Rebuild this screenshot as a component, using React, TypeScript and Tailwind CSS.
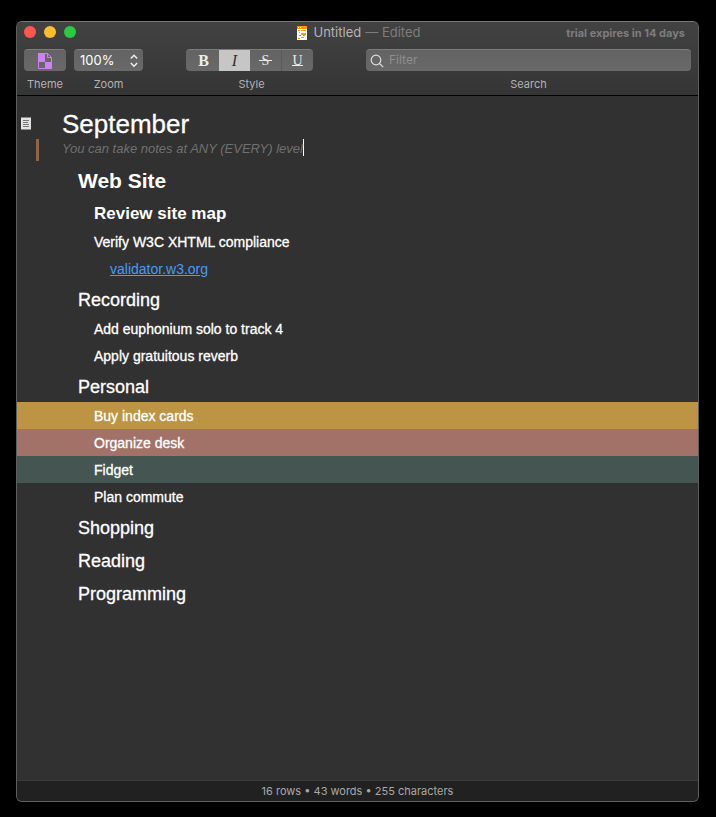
import React, { useState } from "react";

type Row = {
  text: string;
  kind: "big" | "bold" | "heading" | "item" | "link";
  fill?: string;
};

const rows: Row[] = [
  { text: "Web Site", kind: "big" },
  { text: "Review site map", kind: "bold" },
  { text: "Verify W3C XHTML compliance", kind: "item" },
  { text: "validator.w3.org", kind: "link" },
  { text: "Recording", kind: "heading" },
  { text: "Add euphonium solo to track 4", kind: "item" },
  { text: "Apply gratuitous reverb", kind: "item" },
  { text: "Personal", kind: "heading" },
  { text: "Buy index cards", kind: "item", fill: "bg-[#bd9344]" },
  { text: "Organize desk", kind: "item", fill: "bg-[#a27268]" },
  { text: "Fidget", kind: "item", fill: "bg-[#455652]" },
  { text: "Plan commute", kind: "item" },
  { text: "Shopping", kind: "heading" },
  { text: "Reading", kind: "heading" },
  { text: "Programming", kind: "heading" },
];

const rowStyles = {
  big: "h-[35px] pl-[61px] text-[21px] font-bold",
  bold: "h-[30px] pl-[77px] pt-[2px] text-[17px] font-bold",
  heading: "h-[33px] pl-[61px] pt-1 text-[18px] [-webkit-text-stroke:0.3px_white]",
  item: "h-[27px] pl-[77px] pt-[2px] text-[14px] [-webkit-text-stroke:0.3px_white]",
  link: "h-[27px] pl-[93px] pt-[2px] text-[14px]",
};

const control = "border-t border-[#7c7c7c] bg-linear-to-b from-[#636363] to-[#696969]";

function OutlineRow({ row }: { row: Row }) {
  return (
    <li className={`flex items-center ${rowStyles[row.kind]} ${row.fill ?? ""}`}>
      {row.kind === "link" ? (
        <a href="#validator" className="text-[#459cf7] underline underline-offset-1">
          {row.text}
        </a>
      ) : (
        row.text
      )}
    </li>
  );
}

function TitleBar() {
  return (
    <div className="grid h-[22px] grid-cols-[1fr_auto_1fr] items-center pl-[7px] pr-[13px]">
      <div className="flex gap-2 pb-[2px]">
        <button aria-label="Close" className="size-3 rounded-full bg-[#ff5650]" />
        <button aria-label="Minimize" className="size-3 rounded-full bg-[#ffbd2e]" />
        <button aria-label="Full screen" className="size-3 rounded-full bg-[#28cc41]" />
      </div>
      <h1 className="flex items-center pl-2 text-[13px] text-[#b4b4b4]">
        <svg width="10" height="14" viewBox="0 0 10 14" className="mr-[7px]" aria-hidden="true" shapeRendering="crispEdges">
          <path fill="#fff" d="M0 0h10v14H0z" />
          <path fill="#ff9500" d="M0 0h10v3H0zM1 4h2v1H1zM4 4h5v1H4zM2 6h1v1H2zM4 7h5v2H4zM2 9h2v1H2zM6 9h2v1H6zM1 12h2v1H1zM4 11h3v1H4z" />
          <path fill="#fff" d="M1 1h1v1H1zM3 1h1v1H3z" />
        </svg>
        Untitled<span className="ml-1 text-[#7d7d7d]">— Edited</span>
      </h1>
      <p className="text-right text-[11px] font-bold text-[#7d7d7d]">trial expires in 14 days</p>
    </div>
  );
}

function StyleButtons() {
  const [active, setActive] = useState("Italic");
  const styles = [
    { name: "Bold", glyph: "B", look: "font-bold", line: "" },
    { name: "Italic", glyph: "I", look: "italic", line: "" },
    { name: "Strikethrough", glyph: "S", look: "", line: "top-[10px] w-[13px]" },
    { name: "Underline", glyph: "U", look: "", line: "top-[15px] w-[11px]" },
  ];
  return (
    <div className={`grid h-[22px] w-[127px] grid-cols-[33px_31px_31px_1fr] overflow-hidden rounded ${control}`}>
      {styles.map((s) => (
        <button
          key={s.name}
          aria-label={s.name}
          aria-pressed={active === s.name}
          onClick={() => setActive(s.name)}
          className={`relative flex justify-center font-['Liberation_Serif',serif] leading-[21px] ${s.look} ${
            s.line ? "text-[14px]" : "text-[16px]"
          } ${s.name === "Underline" ? "border-l border-[#5a5a5a]" : ""} ${
            active === s.name ? "bg-[#c6c6c6] text-[#333]" : "text-[#ececec]"
          }`}
        >
          <span className={s.name === "Bold" ? "pl-[2px]" : ""}>{s.glyph}</span>
          {s.line && <span className={`absolute h-px bg-[#ececec] ${s.line}`} />}
        </button>
      ))}
    </div>
  );
}

function Toolbar() {
  return (
    <div className="flex items-start pl-[7px] pr-[7px] pt-[5px] text-[11px] text-[#b2b2b2]">
      <div className="flex w-[42px] flex-col items-center gap-[5px]">
        <button aria-label="Theme" className={`flex h-[22px] w-full items-center justify-center rounded ${control}`}>
          <svg width="14" height="16" viewBox="0 0 14 16" aria-hidden="true">
            <path fill="#cf80f5" d="M0 0h7v9H0zM7 9h7v7H7z" />
            <path fill="none" stroke="#cf80f5" d="M.5.5h9l4 4v11H.5zM9.500.5v4h4" />
          </svg>
        </button>
        <span>Theme</span>
      </div>
      <div className="ml-2 flex w-[69px] flex-col items-center gap-[5px]">
        <div className={`relative h-[22px] w-full rounded ${control}`}>
          <select id="zoom" defaultValue="100%" className="block h-5 w-full appearance-none pl-[6px] text-[13px] leading-5 text-white outline-none">
            <option>100%</option>
            <option>150%</option>
          </select>
          <svg width="8" height="14" viewBox="0 0 8 14" className="pointer-events-none absolute right-[5px] top-1" fill="none" stroke="#eee" strokeWidth="1.5" aria-hidden="true">
            <path d="M.8 4.500 4 1.300l3.200 3.200M.8 9l3.200 3.200L7.200 9" />
          </svg>
        </div>
        <label htmlFor="zoom">Zoom</label>
      </div>
      <div className="ml-[43px] flex flex-col items-center gap-[5px]">
        <StyleButtons />
        <span className="pl-1">Style</span>
      </div>
      <div className="ml-[53px] flex min-w-0 flex-1 flex-col items-center gap-[5px]">
        <div className={`flex h-[22px] w-full items-center rounded pl-1 ${control}`}>
          <svg width="14" height="14" viewBox="0 0 14 14" fill="none" stroke="#ddd" strokeWidth="1.200" aria-hidden="true">
            <circle cx="6" cy="6" r="4.800" />
            <path d="m9.500 9.500 3.700 3.700" />
          </svg>
          <input id="filter" placeholder="Filter" className="ml-[5px] min-w-0 flex-1 pb-[2px] text-[12px] text-white outline-none placeholder:text-[#8e8e8e]" />
        </div>
        <label htmlFor="filter">Search</label>
      </div>
    </div>
  );
}

export default function App() {
  return (
    <div className="flex min-h-screen flex-col bg-black pb-[15px] pl-4 pr-[17px] pt-[21px] font-['Inter',sans-serif]">
      <div className="flex flex-1 flex-col overflow-hidden rounded-md border border-[#5e5e5e] border-t-[#777] bg-[#313131]">
        <header className="h-[74px] border-b border-black bg-linear-to-b from-[#424242] to-[#353535]">
          <TitleBar />
          <Toolbar />
        </header>
        <main className="flex-1 font-['Liberation_Sans',Arial,sans-serif] text-white">
          <div className="flex h-[43px] items-end pl-[3px]">
            <svg width="12" height="13" viewBox="0 0 12 13" className="mb-[9px]" aria-hidden="true">
              <path fill="#e2e4e2" d="M1 .5h10v12H1z" />
              <path stroke="#777" d="M3 3.500h6M3 5.500h5M3 7.500h6M3 9.500h6" />
            </svg>
            <h2 className="ml-[30px] text-[26px] leading-[30px] [-webkit-text-stroke:0.3px_white]">September</h2>
          </div>
          <div className="mb-[2px] ml-[19px] flex h-[22px] border-l-[3px] border-[#8c6647] pl-[23px]">
            <p className="h-[17px] border-r border-white text-[13px] italic leading-5 text-[#707070]">
              You can take notes at ANY (EVERY) level
            </p>
          </div>
          <ul>
            {rows.map((row) => (
              <OutlineRow key={row.text} row={row} />
            ))}
          </ul>
        </main>
        <footer className="h-[21px] border-t border-[#3a3a3a] bg-[#212121] text-center text-[11px] leading-[20px] text-[#a8a8a8]">
          16 rows • 43 words • 255 characters
        </footer>
      </div>
    </div>
  );
}
